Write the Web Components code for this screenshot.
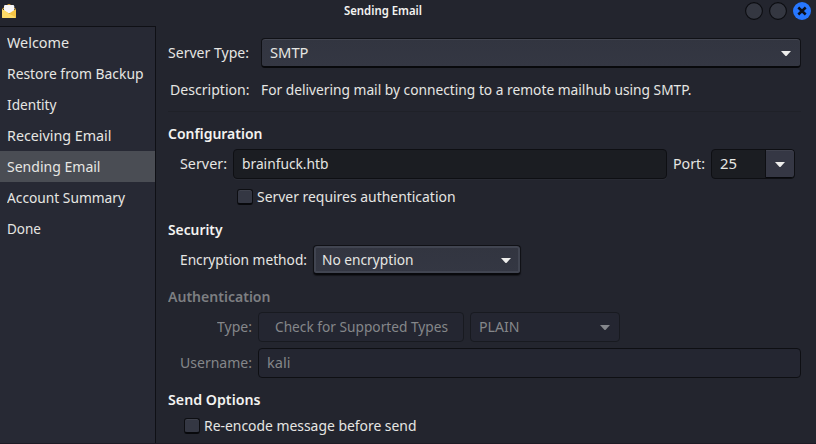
<!DOCTYPE html>
<html lang="en">
<head>
<meta charset="utf-8">
<title>Sending Email</title>
<style>
html,body{margin:0;width:816px;height:444px;overflow:hidden;background:#23252e}
body{font:15px/20px "Noto Sans","Open Sans",sans-serif;color:#e6e6e3}
</style>
</head>
<body>
<mail-window></mail-window>
<script>
const define = (name, html, setup) => customElements.define(name, class extends HTMLElement {
  constructor() {
    super();
    const t = document.createElement('template');
    t.innerHTML = html.trim();
    this.attachShadow({mode: 'open'}).append(t.content.cloneNode(true));
  }
  connectedCallback() { if (setup) setup(this, this.shadowRoot); }
});

// A label condensed horizontally to the width given in its w attribute.
define('ui-text', `
<style>
:host{display:block;flex:none;height:20px;line-height:18px}
:host([bold]){font-weight:600;color:#f3f3f1}
:host([dim]){color:#85878a}
span{display:block;width:max-content;white-space:pre;transform-origin:0 50%}
</style><span><slot></slot></span>`, (el, root) => {
  const w = +el.getAttribute('w');
  const span = root.querySelector('span');
  span.style.transform = 'scaleX(' + w / span.getBoundingClientRect().width + ')';
  el.style.width = w + 'px';
});

define('ui-arrow', `
<style>:host{display:block;width:10px;height:5px;margin-top:1px;color:#eeeeec}:host([dim]){color:#85878c}svg{display:block}</style>
<svg width="10" height="5" viewBox="0 0 10 5"><path d="M0 0H10L5.7 4.7Q5 5.3 4.3 4.7Z" fill="currentColor"/></svg>`);

define('ui-combo', `
<style>
:host{display:flex;align-items:center;justify-content:space-between;box-sizing:border-box;flex:none;height:30px;padding:1px 9px 0 8px;
border:1px solid #101116;border-bottom:2px solid #08090c;border-radius:4px;background:linear-gradient(#323540,#343743);box-shadow:inset 0 1px #424550}
:host([focus]){box-shadow:inset 0 0 0 2px #414551,0 1px 1px #15161b}
:host([disabled]){padding-top:0;border:1px solid #181a20;background:#242631;box-shadow:none}
</style><slot></slot><ui-arrow></ui-arrow>`, (el, root) => {
  if (el.hasAttribute('disabled')) root.querySelector('ui-arrow').setAttribute('dim', '');
});

define('ui-button', `
<style>:host{display:flex;align-items:center;justify-content:center;box-sizing:border-box;flex:none;height:30px;border:1px solid #181a20;border-radius:4px;background:#242631}</style><slot></slot>`);

define('ui-entry', `
<style>
:host{display:flex;align-items:center;box-sizing:border-box;flex:none;height:30px;padding-left:8px;border:1px solid #0e0f13;border-radius:4px;background:#1b1d22;box-shadow:0 1px #292b34}
:host([disabled]){background:#242631;box-shadow:none}
</style><slot></slot>`);

define('ui-spin', `
<style>
:host{display:flex;box-sizing:border-box;flex:none;width:84px;height:30px;border:1px solid #0e0f13;border-radius:4px;background:#1b1d22;overflow:hidden}
.value{flex:1;display:flex;align-items:center;padding-left:8px}
.drop{width:28px;display:flex;align-items:center;justify-content:center;border-left:1px solid #0e0f13;border-bottom:1px solid #08090c;border-radius:0 3px 3px 0;background:#353744;box-shadow:inset 0 1px #40424e}
</style><div class="value"><slot></slot></div><div class="drop"><ui-arrow></ui-arrow></div>`);

define('ui-check', `
<style>
:host{display:flex;align-items:center;gap:4px;height:20px}
i{width:16px;height:16px;box-sizing:border-box;border:1px solid #0d0e12;border-bottom:2px solid #08090c;border-radius:3px;background:#343743;box-shadow:inset 0 1px #3f424d}
</style><i></i><slot></slot>`);

define('title-bar', `
<style>
:host{display:grid;grid-template-columns:744px 1fr;height:26px;box-sizing:border-box}
.left{display:flex;padding:3px 0 0 1px}
.left svg{flex:none}
ui-text{margin-left:327px;font-size:12px;margin-top:-1px}
.buttons{display:flex;gap:6px;padding:2px 0 0 1px}
.buttons svg{flex:none}
</style>
<div class="left">
<svg width="16" height="16" viewBox="0 0 16 16">
<path d="M1 6L7 1.3Q8 .6 9 1.3L15 6Z" fill="#d99f28"/>
<path d="M3 3.2Q3 2 4.2 2H12Q13.2 2 13.2 3.2V10H3Z" fill="#f7f7f8"/>
<path d="M1 6L8 10.6L15 6V14Q15 15 14 15H2Q1 15 1 14Z" fill="#f6c445"/>
<path d="M1 6L9.5 11.5L15 14.3Q14.7 15 14 15H2Q1 15 1 14Z" fill="#fddb68"/>
</svg>
<ui-text bold w="78">Sending Email</ui-text>
</div>
<div class="buttons">
<svg width="18" height="18"><circle cx="9" cy="9" r="8.4" fill="#343741" stroke="#0b0c10" stroke-width="1.1"/></svg>
<svg width="18" height="18"><circle cx="9" cy="9" r="8.4" fill="#343741" stroke="#0b0c10" stroke-width="1.1"/></svg>
<svg width="18" height="18"><circle cx="9" cy="9" r="9" fill="#2777ff"/><path d="M5.3 5.5L12.7 12.5M12.7 5.5L5.3 12.5" stroke="#0c0f18" stroke-width="2.5"/></svg>
</div>`);

define('nav-item', `
<style>:host{display:flex;align-items:center;height:31px;padding-left:6.5px}:host([selected]){background:#4a4d54}</style><slot></slot>`);

define('side-nav', `
<style>:host{display:block;box-sizing:border-box;border-top:1px solid #0f1015;border-right:1px solid #0f1015;background:#272934}</style>
<nav-item><ui-text w="62">Welcome</ui-text></nav-item>
<nav-item><ui-text w="136.5">Restore from Backup</ui-text></nav-item>
<nav-item><ui-text w="49.5">Identity</ui-text></nav-item>
<nav-item><ui-text w="104.5">Receiving Email</ui-text></nav-item>
<nav-item selected><ui-text w="93.5">Sending Email</ui-text></nav-item>
<nav-item><ui-text w="118">Account Summary</ui-text></nav-item>
<nav-item><ui-text w="34">Done</ui-text></nav-item>`);

define('form-row', `
<style>:host{display:flex;align-items:center;flex:none}</style><slot></slot>`);

define('settings-pane', `
<style>
:host{display:flex;flex-direction:column;padding:12px 15px 0 12px;box-sizing:border-box}
hr{width:100%;height:1px;border:0;margin:11px 0 0;background:#1f2128;flex:none}
.label{display:flex;justify-content:flex-end;flex:none}
</style>
<form-row><div class="label" style="width:81px"><ui-text w="81">Server Type:</ui-text></div><ui-combo style="width:540px;margin-left:12px"><ui-text w="38.5">SMTP</ui-text></ui-combo></form-row>
<form-row style="margin-top:12px"><div class="label" style="width:81px"><ui-text w="79.5">Description:</ui-text></div><ui-text w="430.5" style="margin-left:12px">For delivering mail by connecting to a remote mailhub using SMTP.</ui-text></form-row>
<hr>
<ui-text bold w="94.5" style="margin-top:12px">Configuration</ui-text>
<form-row style="margin-top:5px;padding-left:12px"><ui-text w="47">Server:</ui-text><ui-entry style="width:434px;margin:0 6px"><ui-text w="86.5">brainfuck.htb</ui-text></ui-entry><ui-text w="32">Port:</ui-text><ui-spin style="margin-left:6px"><ui-text w="17">25</ui-text></ui-spin></form-row>
<ui-check style="margin:8px 0 0 69px"><ui-text w="198.5">Server requires authentication</ui-text></ui-check>
<ui-text bold w="54.5" style="margin-top:13px">Security</ui-text>
<form-row style="margin-top:5px;padding-left:12px"><ui-text w="127">Encryption method:</ui-text><ui-combo focus style="width:208px;margin-left:6px"><ui-text w="91.5">No encryption</ui-text></ui-combo></form-row>
<ui-text bold dim w="102.5" style="margin-top:12px;color:#7d7f82">Authentication</ui-text>
<form-row style="margin-top:5px"><div class="label" style="width:84px"><ui-text dim w="35">Type:</ui-text></div><ui-button style="width:206px;margin:0 6px"><ui-text dim w="173">Check for Supported Types</ui-text></ui-button><ui-combo disabled style="width:150px"><ui-text dim w="40.5">PLAIN</ui-text></ui-combo></form-row>
<form-row style="margin-top:6px"><div class="label" style="width:84px"><ui-text dim w="72">Username:</ui-text></div><ui-entry disabled style="width:543px;margin-left:6px"><ui-text dim w="23.5">kali</ui-text></ui-entry></form-row>
<ui-text bold w="92.5" style="margin-top:12px">Send Options</ui-text>
<ui-check style="margin:6px 0 0 16px"><ui-text w="212.5">Re-encode message before send</ui-text></ui-check>`);

define('mail-window', `
<style>
:host{display:flex;flex-direction:column;width:816px;height:444px;background:#23252e;box-sizing:border-box;border-bottom:1px solid #1d1b25}
.body{display:grid;grid-template-columns:156px 660px;flex:1;min-height:0}
</style>
<title-bar></title-bar>
<div class="body"><side-nav></side-nav><settings-pane></settings-pane></div>`);
</script>
</body>
</html>
